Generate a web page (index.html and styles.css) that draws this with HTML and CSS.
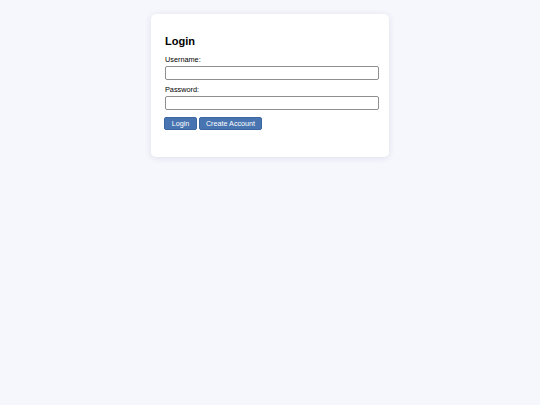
FILE: index.html
```html
<!DOCTYPE html>
<html>
<head>
<meta charset="utf-8">
<link rel="stylesheet" href="styles.css">
</head>
<body>
<div class="card">
  <h2 class="title">Login</h2>
  <label class="label" for="u">Username:</label>
  <input class="field" id="u" type="text">
  <label class="label pw" for="p">Password:</label>
  <input class="field" id="p" type="password">
  <div class="actions">
    <button class="btn btn-login">Login</button>
    <button class="btn btn-create">Create Account</button>
  </div>
</div>
</body>
</html>
```
FILE: styles.css
```css
html, body {
  margin: 0;
  padding: 0;
}
body {
  background: #f6f7fd;
  font-family: "Liberation Sans", Arial, sans-serif;
  color: #000;
  height: 405px;
}
.card {
  box-sizing: border-box;
  width: 238px;
  margin: 14px auto 0;
  background: #fff;
  border-radius: 5px;
  box-shadow: 0 1px 6px rgba(40, 50, 90, 0.12);
  padding: 20px 10px 27px 14px;
}
.title {
  font-size: 11px;
  line-height: 14px;
  margin: 0 0 7px;
  font-weight: bold;
}
.label {
  display: block;
  font-size: 7.3px;
  line-height: 10px;
  margin-bottom: 1px;
}
.pw {
  margin-top: 5px;
}
.field {
  display: block;
  box-sizing: border-box;
  width: 214px;
  height: 14px;
  margin: 0;
  padding: 0 3px;
  border: 1px solid #8f8f8f;
  border-radius: 2px;
  background: #fff;
}
.actions {
  display: flex;
  gap: 2px;
  margin-top: 7px;
  margin-left: -1px;
}
.btn {
  box-sizing: border-box;
  height: 13px;
  padding: 0;
  border: 1px solid #3d67a3;
  border-radius: 2px;
  background: #4874b1;
  color: #fff;
  font-family: "Liberation Sans", Arial, sans-serif;
  font-size: 7.2px;
  line-height: 11px;
}
.btn-login {
  width: 33px;
}
.btn-create {
  width: 63px;
}
```
